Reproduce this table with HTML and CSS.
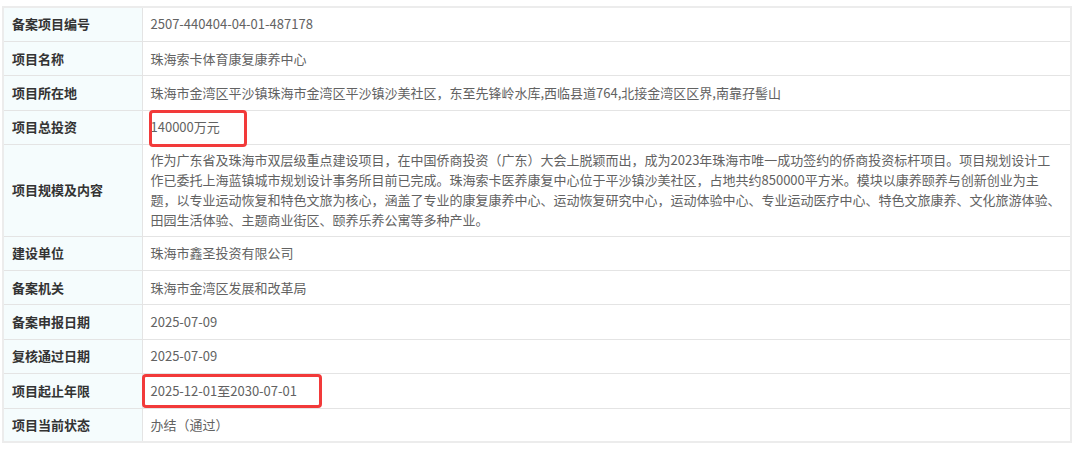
FILE: index.html
```html
<!DOCTYPE html>
<html lang="zh-CN">
<head>
    <meta charset="UTF-8">
    <title>项目备案信息</title>
    <link rel="stylesheet" href="styles.css">
</head>
<body>
<table class="info">
    <tr>
        <th>备案项目编号</th>
        <td>2507-440404-04-01-487178</td>
    </tr>
    <tr>
        <th>项目名称</th>
        <td>珠海索卡体育康复康养中心</td>
    </tr>
    <tr>
        <th>项目所在地</th>
        <td>珠海市金湾区平沙镇珠海市金湾区平沙镇沙美社区，东至先锋岭水库,西临县道764,北接金湾区区界,南靠孖髻山</td>
    </tr>
    <tr>
        <th>项目总投资</th>
        <td class="marked">140000万元<span class="mark mark-money"></span></td>
    </tr>
    <tr class="tall">
        <th>项目规模及内容</th>
        <td>作为广东省及珠海市双层级重点建设项目，在中国侨商投资（广东）大会上脱颖而出，成为2023年珠海市唯一成功签约的侨商投资标杆项目。项目规划设计工作已委托上海蓝镇城市规划设计事务所目前已完成。珠海索卡医养康复中心位于平沙镇沙美社区，占地共约850000平方米。模块以康养颐养与创新创业为主题，以专业运动恢复和特色文旅为核心，涵盖了专业的康复康养中心、运动恢复研究中心，运动体验中心、专业运动医疗中心、特色文旅康养、文化旅游体验、田园生活体验、主题商业街区、颐养乐养公寓等多种产业。</td>
    </tr>
    <tr>
        <th>建设单位</th>
        <td>珠海市鑫圣投资有限公司</td>
    </tr>
    <tr>
        <th>备案机关</th>
        <td>珠海市金湾区发展和改革局</td>
    </tr>
    <tr>
        <th>备案申报日期</th>
        <td>2025-07-09</td>
    </tr>
    <tr>
        <th>复核通过日期</th>
        <td>2025-07-09</td>
    </tr>
    <tr>
        <th>项目起止年限</th>
        <td class="marked">2025-12-01至2030-07-01<span class="mark mark-term"></span></td>
    </tr>
    <tr>
        <th>项目当前状态</th>
        <td>办结（通过）</td>
    </tr>
</table>
</body>
</html>
```

FILE: styles.css
```css
body {
    margin: 6px 0 0 2px;
    background: #fff;
    font-family: "Noto Sans CJK SC", "Microsoft YaHei", sans-serif;
    font-size: 13px;
}

.info {
    width: 1070px;
    border-collapse: collapse;
    border: 2px solid #ececec;
}

.info th,
.info td {
    height: 34.4px;
    padding: 0 8px;
    border: 1px solid #e4e4e4;
    box-sizing: border-box;
    vertical-align: middle;
    text-align: left;
    line-height: 20px;
}

.info th {
    width: 139px;
    background: #f5fcfd;
    color: #333;
    font-weight: bold;
}

.info td {
    color: #626262;
}

.info .tall td,
.info .tall th {
    height: 91.5px;
    padding-top: 5px;
    padding-bottom: 5px;
}

.marked {
    position: relative;
}

/* 红色标注框 */
.mark {
    position: absolute;
    border: 3px solid #f23a3a;
    border-radius: 4px;
    box-sizing: border-box;
}

.mark-money {
    left: 6px;
    top: -1px;
    width: 98px;
    height: 37px;
}

.mark-term {
    left: -1px;
    top: 0;
    width: 180px;
    height: 34px;
}
```
